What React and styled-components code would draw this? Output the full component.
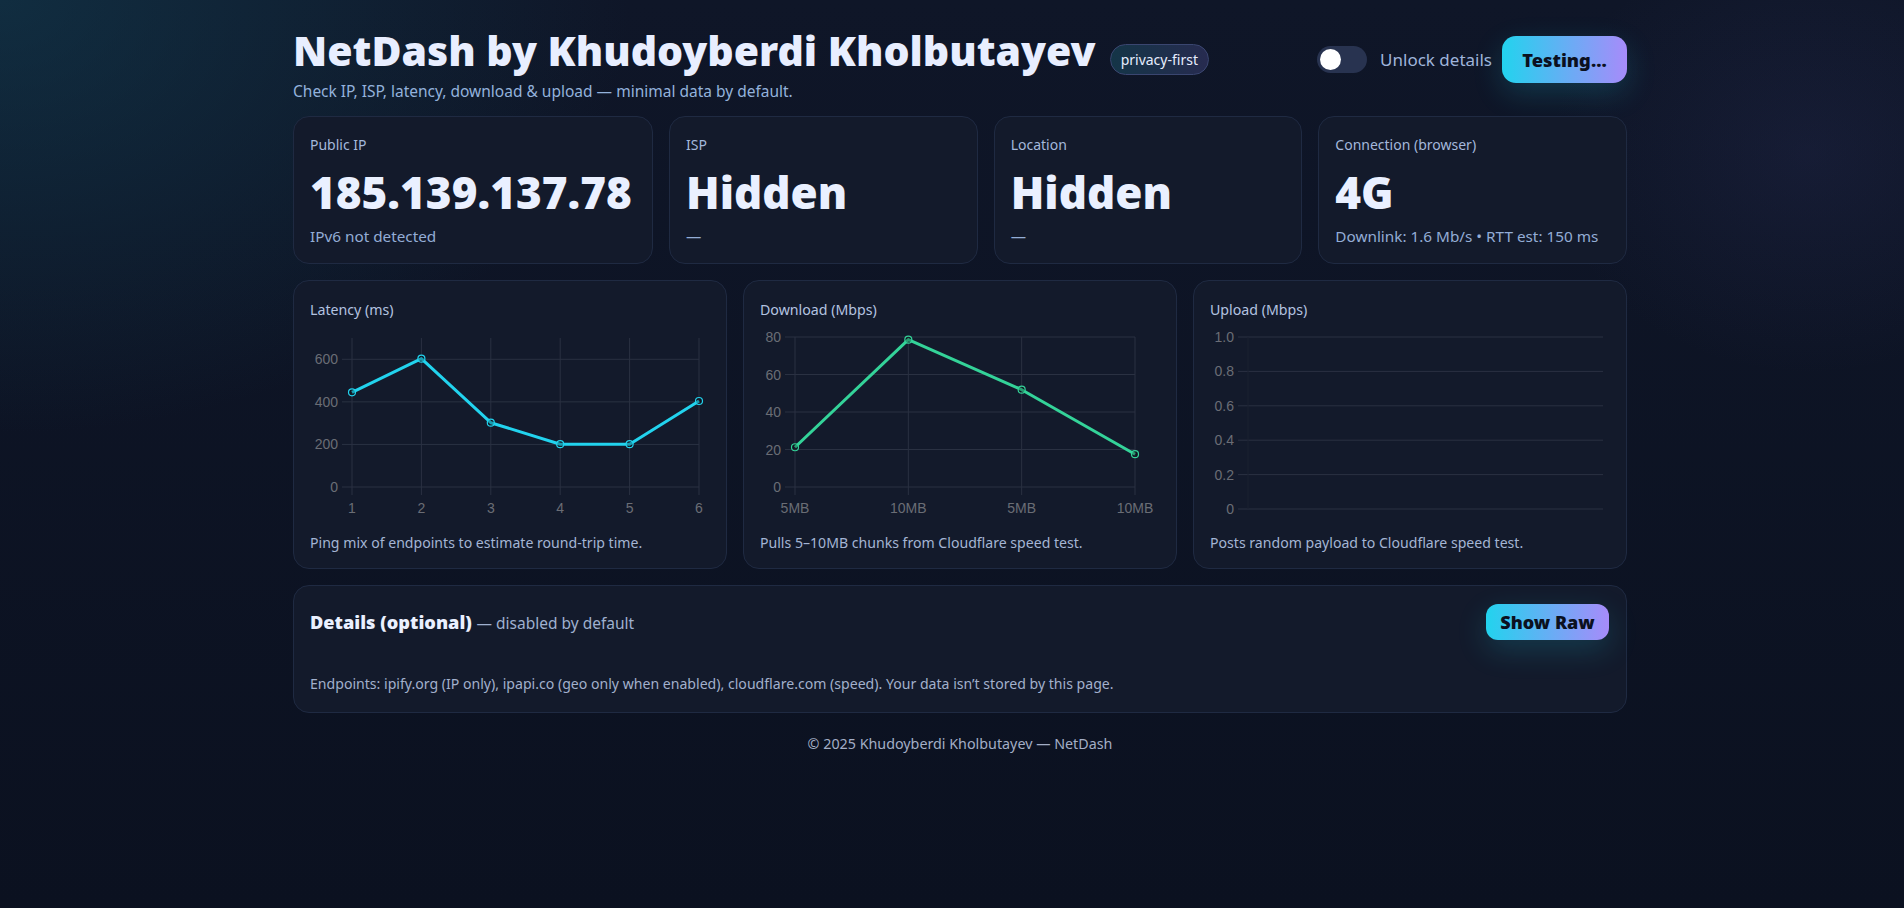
import React from 'react';
import styled, { createGlobalStyle } from 'styled-components';

const Global = createGlobalStyle`
  html, body { margin: 0; padding: 0; }
  body {
    min-height: 908px;
    font-family: "Noto Sans", Lato, sans-serif;
    color: #e6edff;
    background:
      radial-gradient(900px 620px at 0% 0%, rgba(18, 64, 84, 0.55), rgba(18, 64, 84, 0) 70%),
      radial-gradient(260px 220px at 95% 17%, rgba(70, 72, 140, 0.14), rgba(70, 72, 140, 0) 100%),
      linear-gradient(180deg, #0f1628 0%, #0b1120 100%);
  }
`;

const Page = styled.div`
  padding: 0 0 40px 16px;
`;

const Container = styled.div`
  max-width: 1334px;
  margin: 0 auto;
`;

const Header = styled.header`
  display: flex;
  align-items: flex-start;
  justify-content: space-between;
  padding-top: 26px;
`;

const TitleBlock = styled.div`
  display: flex;
  flex-direction: column;
`;

const TitleRow = styled.div`
  display: flex;
  align-items: center;
  gap: 14px;
`;

const Title = styled.h1`
  margin: 0;
  font-size: 41px;
  font-weight: 900;
  line-height: 1.2;
  color: #e8eeff;
`;

const Badge = styled.span`
  display: inline-flex;
  align-items: center;
  height: 29px;
  padding: 0 10px;
  border-radius: 999px;
  font-size: 14px;
  color: #e6edff;
  background: linear-gradient(90deg, #143547, #272b50);
  border: 1px solid #3a4670;
  margin-top: 17px;
`;

const Subtitle = styled.p`
  margin: 5px 0 0;
  font-size: 15.5px;
  color: #93b2dc;
`;

const Controls = styled.div`
  display: flex;
  align-items: center;
  gap: 10px;
  margin-top: 10px;
`;

const Toggle = styled.span`
  width: 50px;
  height: 27px;
  border-radius: 999px;
  background: #283350;
  display: flex;
  align-items: center;
  padding: 0 3px;
  box-sizing: border-box;
  margin-right: 3px;
`;

const Knob = styled.span`
  width: 21px;
  height: 21px;
  border-radius: 50%;
  background: #ffffff;
`;

const ToggleLabel = styled.span`
  font-size: 17px;
  color: #9fb4da;
`;

const GradientButton = styled.button`
  border: 0;
  cursor: pointer;
  font-family: "Noto Sans", sans-serif;
  font-weight: 900;
  color: #0b1020;
  background: linear-gradient(90deg, #22d3ee, #a78bfa);
  border-radius: ${p => (p.$small ? '12px' : '14px')};
  font-size: ${p => (p.$small ? '18px' : '18.3px')};
  height: ${p => (p.$small ? '36px' : '47px')};
  width: ${p => (p.$small ? '123px' : '125px')};
  padding: 0;
  box-shadow: 0 10px 30px rgba(34, 211, 238, 0.18);
`;

const StatGrid = styled.section`
  display: grid;
  grid-template-columns: 360px 1fr 1fr 1fr;
  gap: 16px;
  margin-top: 14px;
`;

const Card = styled.div`
  background: #131a2b;
  border: 1px solid #1f2a42;
  border-radius: 16px;
  padding: 16px;
  box-sizing: border-box;
`;

const StatCard = styled(Card)`
  height: 148px;
  padding-top: 18px;
`;

const Label = styled.div`
  font-size: 14px;
  color: #a4b8dc;
  line-height: 19px;
`;

const BigValue = styled.div`
  font-size: 44px;
  font-weight: 900;
  color: #eaf0ff;
  line-height: 1;
  margin-top: 16px;
`;

const SubValue = styled.div`
  font-size: 15.3px;
  color: #93add6;
  margin-top: 12px;
`;

const ChartGrid = styled.section`
  display: grid;
  grid-template-columns: repeat(3, 1fr);
  gap: 16px;
  margin-top: 16px;
`;

const ChartCard = styled(Card)`
  height: 289px;
  padding-top: 19px;
`;

const ChartTitle = styled.div`
  font-size: 14.2px;
  color: #b3c3e0;
  line-height: 19px;
`;

const ChartSvg = styled.svg`
  display: block;
  width: 400px;
  height: 190px;
  margin-top: 11px;
`;

const Caption = styled.div`
  font-size: 14.1px;
  color: #a4b5d4;
  margin-top: 13px;
`;

const DetailsCard = styled(Card)`
  margin-top: 16px;
  height: 128px;
  padding: 18px 17px 16px 16px;
`;

const DetailsHead = styled.div`
  display: flex;
  align-items: center;
  justify-content: space-between;
`;

const DetailsTitle = styled.div`
  font-size: 18.2px;
  font-weight: 900;
  color: #eaf0ff;
  span {
    font-size: 15.5px;
    font-weight: 400;
    color: #9fb0cf;
  }
`;

const Endpoints = styled.p`
  margin: 34px 0 0;
  font-size: 14.1px;
  color: #a2b0cc;
`;

const Footer = styled.footer`
  text-align: center;
  font-size: 14.3px;
  color: #a3aec6;
  padding-top: 21px;
`;

const GRID = '#2a3142';
const TICK = '#6a6d75';

function LineChart({ yTicks, xLabels, data, color, yAxisX, plotRight, yTop, yBottom, maxV, vgrid = true, axisColor }) {
  const scaleY = v => yBottom - (v / maxV) * (yBottom - yTop);
  const n = xLabels.length;
  const xs = xLabels.map((_, i) => (n > 1 ? yAxisX + ((plotRight - yAxisX) * i) / (n - 1) : yAxisX));
  const pts = data.map((v, i) => `${xs[i]},${scaleY(v)}`).join(' ');
  return (
    <ChartSvg viewBox="0 0 400 190">
      {yTicks.map(t => (
        <g key={t.label}>
          <line x1={yAxisX - 10} x2={plotRight} y1={scaleY(t.v)} y2={scaleY(t.v)} stroke={GRID} strokeWidth="1" />
          <text x={yAxisX - 14} y={scaleY(t.v) + 5} textAnchor="end" fill={TICK} fontSize="14" fontFamily="Liberation Sans, Arial, sans-serif">{t.label}</text>
        </g>
      ))}
      {vgrid && xs.map((x, i) => (
        <g key={i}>
          <line x1={x} x2={x} y1={yTop} y2={yBottom + 8} stroke={GRID} strokeWidth="1" />
          <text x={x} y={yBottom + 26} textAnchor="middle" fill={TICK} fontSize="14" fontFamily="Liberation Sans, Arial, sans-serif">{xLabels[i]}</text>
        </g>
      ))}
      {!vgrid && <line x1={yAxisX} x2={yAxisX} y1={yTop} y2={yBottom} stroke={axisColor} strokeWidth="1" />}
      {data.length > 0 && (
        <>
          <polyline points={pts} fill="none" stroke={color} strokeWidth="3" strokeLinejoin="round" />
          {data.map((v, i) => (
            <circle key={i} cx={xs[i]} cy={scaleY(v)} r="3.5" fill="rgba(0,0,0,0.25)" stroke={color} strokeWidth="1.2" />
          ))}
        </>
      )}
    </ChartSvg>
  );
}

const stats = [
  { label: 'Public IP', value: '185.139.137.78', sub: 'IPv6 not detected' },
  { label: 'ISP', value: 'Hidden', sub: '—' },
  { label: 'Location', value: 'Hidden', sub: '—' },
  { label: 'Connection (browser)', value: '4G', sub: 'Downlink: 1.6 Mb/s • RTT est: 150 ms' },
];

export default function App() {
  return (
    <Page>
      <Global />
      <Container>
        <Header>
          <TitleBlock>
            <TitleRow>
              <Title>NetDash by Khudoyberdi Kholbutayev</Title>
              <Badge>privacy-first</Badge>
            </TitleRow>
            <Subtitle>Check IP, ISP, latency, download &amp; upload — minimal data by default.</Subtitle>
          </TitleBlock>
          <Controls>
            <Toggle><Knob /></Toggle>
            <ToggleLabel>Unlock details</ToggleLabel>
            <GradientButton>Testing...</GradientButton>
          </Controls>
        </Header>

        <StatGrid>
          {stats.map(s => (
            <StatCard key={s.label}>
              <Label>{s.label}</Label>
              <BigValue>{s.value}</BigValue>
              <SubValue>{s.sub}</SubValue>
            </StatCard>
          ))}
        </StatGrid>

        <ChartGrid>
          <ChartCard>
            <ChartTitle>Latency (ms)</ChartTitle>
            <LineChart
              yTicks={[{ v: 0, label: '0' }, { v: 200, label: '200' }, { v: 400, label: '400' }, { v: 600, label: '600' }]}
              xLabels={['1', '2', '3', '4', '5', '6']}
              data={[445, 603, 302, 201, 201, 404]}
              color="#22d3ee"
              yAxisX={42}
              plotRight={389}
              yTop={8}
              yBottom={157}
              maxV={700}
            />
            <Caption>Ping mix of endpoints to estimate round-trip time.</Caption>
          </ChartCard>
          <ChartCard>
            <ChartTitle>Download (Mbps)</ChartTitle>
            <LineChart
              yTicks={[0, 20, 40, 60, 80].map(v => ({ v, label: String(v) }))}
              xLabels={['5MB', '10MB', '5MB', '10MB']}
              data={[21.2, 78.6, 51.9, 17.5]}
              color="#34d399"
              yAxisX={35}
              plotRight={375}
              yTop={7}
              yBottom={157}
              maxV={80}
            />
            <Caption>Pulls 5–10MB chunks from Cloudflare speed test.</Caption>
          </ChartCard>
          <ChartCard>
            <ChartTitle>Upload (Mbps)</ChartTitle>
            <LineChart
              yTicks={[0, 0.2, 0.4, 0.6, 0.8, 1].map(v => ({ v, label: v === 0 ? '0' : v.toFixed(1) }))}
              xLabels={['']}
              data={[]}
              color="#a78bfa"
              yAxisX={38}
              plotRight={393}
              yTop={7}
              yBottom={179}
              maxV={1}
              vgrid={false}
              axisColor="#1a2130"
            />
            <Caption>Posts random payload to Cloudflare speed test.</Caption>
          </ChartCard>
        </ChartGrid>

        <DetailsCard>
          <DetailsHead>
            <DetailsTitle>Details (optional) <span>— disabled by default</span></DetailsTitle>
            <GradientButton $small>Show Raw</GradientButton>
          </DetailsHead>
          <Endpoints>Endpoints: ipify.org (IP only), ipapi.co (geo only when enabled), cloudflare.com (speed). Your data isn’t stored by this page.</Endpoints>
        </DetailsCard>

        <Footer>© 2025 Khudoyberdi Kholbutayev — NetDash</Footer>
      </Container>
    </Page>
  );
}
